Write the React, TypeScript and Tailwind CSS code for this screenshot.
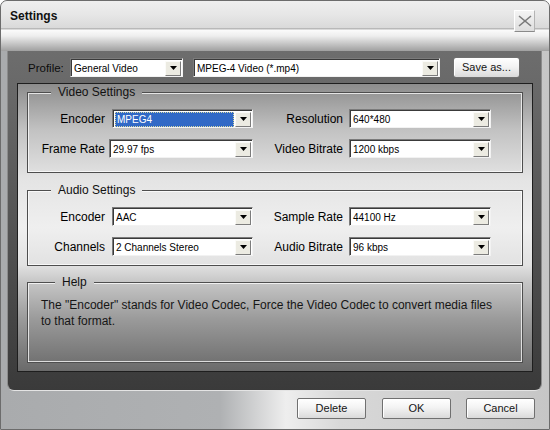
import React from "react";

function Arrow() {
  return (
    <svg width="7" height="4" viewBox="0 0 7 4">
      <polygon points="0,0 7,0 3.5,4" fill="#000" />
    </svg>
  );
}

function Select({
  value,
  className,
  selected,
}: {
  value: string;
  className: string;
  selected?: boolean;
}) {
  return (
    <div
      className={
        "flex items-center h-[19px] bg-white border border-t-[#7b7b7b] border-l-[#7b7b7b] border-r-[#f2f2f2] border-b-[#f2f2f2] shadow-[inset_1px_1px_0_#3a3a3a] " +
        className
      }
    >
      {selected ? (
        <div className="flex-1 ml-[2px] mr-[1px] mt-[1px] h-[15px] flex items-center bg-[#3169c6] border border-dotted border-[#d8d8a0] text-white text-[10px] leading-[13px] pl-[1px] overflow-hidden whitespace-nowrap">
          {value}
        </div>
      ) : (
        <div className="flex-1 pl-[3px] pt-[1px] text-[10px] leading-[13px] text-black overflow-hidden whitespace-nowrap">
          {value}
        </div>
      )}
      <div className="w-[16px] h-[15px] mt-[1px] mr-[1px] flex items-center justify-center bg-[#ecebe2] border border-t-[#fbfbf8] border-l-[#fbfbf8] border-r-[#7c7c7c] border-b-[#7c7c7c]">
        <Arrow />
      </div>
    </div>
  );
}

function Button({ label, className }: { label: string; className: string }) {
  return (
    <div
      className={
        "h-[21px] flex items-center justify-center border border-[#707070] rounded-[2px] bg-[linear-gradient(to_bottom,#ffffff,#f3f3f3_45%,#dadada)] shadow-[inset_1px_1px_0_#ffffff] text-[11px] text-[#141414] " +
        className
      }
    >
      {label}
    </div>
  );
}

function GroupBox({
  title,
  leftW,
  children,
  bodyClass,
}: {
  title: string;
  leftW: string;
  children?: React.ReactNode;
  bodyClass: string;
}) {
  return (
    <div className="flex flex-col">
      <div className="flex h-[14px]">
        <div
          className={
            "mt-[7px] h-[7px] border-t border-l border-[#4e4e4e] shadow-[inset_1px_1px_0_rgba(255,255,255,0.75)] " +
            leftW
          }
        />
        <div className="px-[7px] text-[12px] leading-[14px] text-[#111]">
          {title}
        </div>
        <div className="flex-1 mt-[7px] h-[7px] border-t border-r border-[#4e4e4e] shadow-[inset_-1px_1px_0_rgba(255,255,255,0.75)]" />
      </div>
      <div
        className={
          "border-l border-r border-b border-[#4e4e4e] shadow-[inset_1px_0_0_rgba(255,255,255,0.75),inset_-1px_-1px_0_rgba(255,255,255,0.75)] " +
          bodyClass
        }
      >
        {children}
      </div>
    </div>
  );
}

function Row({
  l1,
  v1,
  l2,
  v2,
  selected,
  s1Class,
}: {
  l1: string;
  v1: string;
  l2: string;
  v2: string;
  selected?: boolean;
  s1Class: string;
}) {
  return (
    <div className="flex items-center h-[19px]">
      <div className="w-[77px] text-right text-[12px] leading-[14px] text-black whitespace-nowrap">
        {l1}
      </div>
      <Select value={v1} selected={selected} className={s1Class} />
      <div className="w-[90px] text-right text-[12px] leading-[14px] text-black whitespace-nowrap">
        {l2}
      </div>
      <Select value={v2} className="ml-[6px] w-[142px]" />
    </div>
  );
}

export default function App() {
  return (
    <div className="w-[550px] h-[430px] font-['Liberation_Sans',Arial,sans-serif]">
      <div className="w-[550px] h-[430px] flex flex-col border border-[#6c6c6c] rounded-t-[7px] overflow-hidden bg-[linear-gradient(to_right,#a9abad,#afb1b3_40%,#eeeeee_52%,#d8d8d8_62%,#c6c6c6)]">
        {/* Header: title bar + band */}
        <div className="h-[50px] flex items-start justify-between pl-[9px] pr-[14px] bg-[linear-gradient(to_bottom,#efefef_0px,#e6e6e6_14px,#d9d9d9_27px,#b8b8b8_27px,#b8b8b8_28px,#fbfbfb_29px,#eeeeee_35px,#a0a0a0_50px)]">
          <span className="mt-[8px] text-[12px] leading-[14px] font-bold text-[#111]">
            Settings
          </span>
          <div className="mt-[9px] w-[21px] h-[22px] flex items-center justify-center border border-t-[#ffffff] border-l-[#ffffff] border-r-[#b4b4b4] border-b-[#8a8a8a] bg-[linear-gradient(to_bottom,#f4f4f4,#dedede)]">
            <svg width="14" height="12" viewBox="0 0 14 12">
              <line x1="1" y1="1" x2="13" y2="11" stroke="#7a7a7a" strokeWidth="1.6" />
              <line x1="13" y1="1" x2="1" y2="11" stroke="#7a7a7a" strokeWidth="1.6" />
            </svg>
          </div>
        </div>

        {/* Dark panel */}
        <div className="ml-[7px] mr-[8px] h-[339px] flex flex-col rounded-b-[6px] bg-[linear-gradient(to_bottom,#6d6d6d,#676767_15%,#3a3a3a)] shadow-[-1px_0_0_#8c8c8c,1px_0_0_#8c8c8c,0_1px_0_#e4e4e4]">
          {/* Profile row */}
          <div className="mt-[6px] h-[21px] flex items-center pl-[20px]">
            <div className="w-[42px] text-[11.5px] leading-[14px] text-[#0c0c0c]">
              Profile:
            </div>
            <Select value="General Video" className="w-[113px]" />
            <Select value="MPEG-4 Video (*.mp4)" className="ml-[10px] w-[247px]" />
            <Button label="Save as..." className="ml-[13px] w-[67px] rounded-[3px]" />
          </div>

          {/* Inner panel */}
          <div className="mt-[5px] ml-[9px] w-[516px] h-[289px] flex flex-col border border-[#1e1e1e] pt-[1px] px-[9px] bg-[linear-gradient(to_bottom,#8c8c8c_0%,#c2c2c2_16%,#e4e4e4_33%,#efefef_50%,#e2e2e2_63%,#c6c6c6_69%,#9a9a9a_82%,#6a6a6a_100%)]">
            <GroupBox title="Video Settings" leftW="w-[24px]" bodyClass="h-[74px] pt-[10px] flex flex-col gap-[11px]">
              <Row
                l1="Encoder"
                v1="MPEG4"
                l2="Resolution"
                v2="640*480"
                selected
                s1Class="ml-[7px] w-[141px]"
              />
              <Row
                l1="Frame Rate"
                v1="29.97 fps"
                l2="Video Bitrate"
                v2="1200 kbps"
                s1Class="ml-[4px] w-[144px]"
              />
            </GroupBox>
            <div className="h-[10px]" />
            <GroupBox title="Audio Settings" leftW="w-[24px]" bodyClass="h-[69px] pt-[10px] flex flex-col gap-[11px]">
              <Row
                l1="Encoder"
                v1="AAC"
                l2="Sample Rate"
                v2="44100 Hz"
                s1Class="ml-[7px] w-[141px]"
              />
              <Row
                l1="Channels"
                v1="2 Channels Stereo"
                l2="Audio Bitrate"
                v2="96 kbps"
                s1Class="ml-[7px] w-[141px]"
              />
            </GroupBox>
            <div className="h-[9px]" />
            <GroupBox title="Help" leftW="w-[28px]" bodyClass="h-[74px] pt-[8px] pl-[13px]">
              <p className="w-[456px] text-[12px] leading-[16px] text-[#161616]">
                The "Encoder" stands for Video Codec, Force the Video Codec to convert media files to that format.
              </p>
            </GroupBox>
          </div>
        </div>

        {/* Bottom buttons */}
        <div className="flex-1 flex justify-end items-start pt-[8px] pr-[14px]">
          <Button label="Delete" className="w-[69px]" />
          <Button label="OK" className="ml-[16px] w-[69px]" />
          <Button label="Cancel" className="ml-[15px] w-[69px]" />
        </div>
      </div>
    </div>
  );
}
